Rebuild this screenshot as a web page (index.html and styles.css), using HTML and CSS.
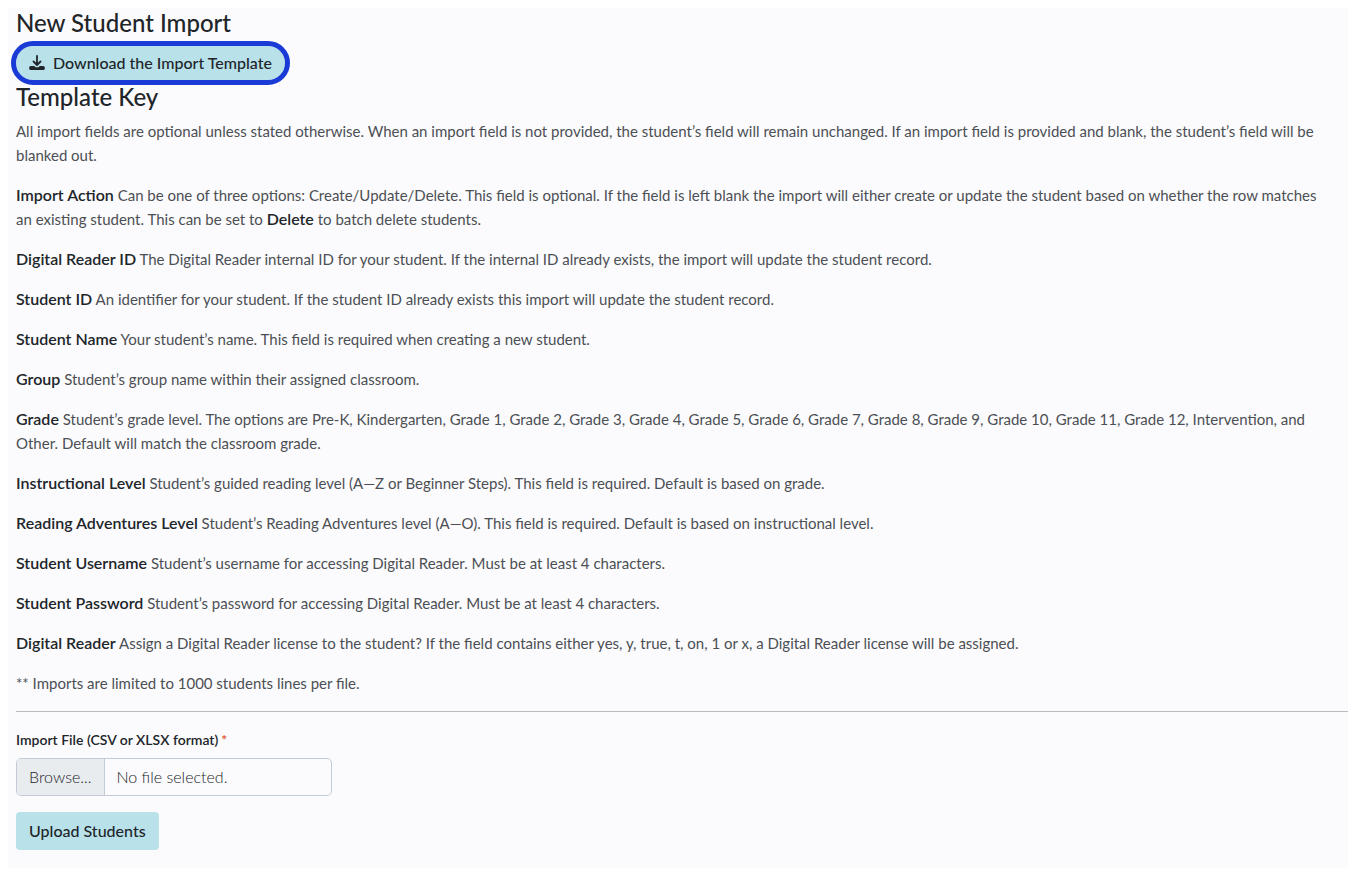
FILE: index.html
```html
<!DOCTYPE html>
<html lang="en">
<head>
<meta charset="utf-8">
<title>New Student Import</title>
<link rel="stylesheet" href="styles.css">
</head>
<body>
<main class="page">
  <h1 class="heading">New Student Import</h1>
  <button type="button" class="btn btn-download">
    <svg class="icon" viewBox="0 0 16 16" aria-hidden="true">
      <path d="M8 1v8M4.500 6.500L8 10l3.500-3.500" fill="none" stroke="currentColor" stroke-width="1.800" stroke-linecap="round" stroke-linejoin="round"/>
      <path d="M1.800 11h3.400l1.400 1.200h2.800L10.800 11h3.400A1.600 1.600 0 0 1 15.800 12.600v.9a1.600 1.600 0 0 1-1.600 1.600H1.800a1.600 1.600 0 0 1-1.600-1.600v-.9A1.600 1.600 0 0 1 1.800 11z" fill="currentColor"/>
    </svg>
    Download the Import Template
  </button>
  <h2 class="heading">Template Key</h2>
  <div class="key">
    <p>All import fields are optional unless stated otherwise. When an import field is not provided, the student’s field will remain unchanged. If an import field is provided and blank, the student’s field will be blanked out.</p>
    <p><strong>Import Action</strong> Can be one of three options: Create/Update/Delete. This field is optional. If the field is left blank the import will either create or update the student based on whether the row matches an existing student. This can be set to <strong>Delete</strong> to batch delete students.</p>
    <p><strong>Digital Reader ID</strong> The Digital Reader internal ID for your student. If the internal ID already exists, the import will update the student record.</p>
    <p><strong>Student ID</strong> An identifier for your student. If the student ID already exists this import will update the student record.</p>
    <p><strong>Student Name</strong> Your student’s name. This field is required when creating a new student.</p>
    <p><strong>Group</strong> Student’s group name within their assigned classroom.</p>
    <p><strong>Grade</strong> Student’s grade level. The options are Pre-K, Kindergarten, Grade 1, Grade 2, Grade 3, Grade 4, Grade 5, Grade 6, Grade 7, Grade 8, Grade 9, Grade 10, Grade 11, Grade 12, Intervention, and Other. Default will match the classroom grade.</p>
    <p><strong>Instructional Level</strong> Student’s guided reading level (A—Z or Beginner Steps). This field is required. Default is based on grade.</p>
    <p><strong>Reading Adventures Level</strong> Student’s Reading Adventures level (A—O). This field is required. Default is based on instructional level.</p>
    <p><strong>Student Username</strong> Student’s username for accessing Digital Reader. Must be at least 4 characters.</p>
    <p><strong>Student Password</strong> Student’s password for accessing Digital Reader. Must be at least 4 characters.</p>
    <p><strong>Digital Reader</strong> Assign a Digital Reader license to the student? If the field contains either yes, y, true, t, on, 1 or x, a Digital Reader license will be assigned.</p>
    <p>** Imports are limited to 1000 students lines per file.</p>
  </div>
  <hr class="rule">
  <form class="form">
    <label class="label" for="file">Import File (CSV or XLSX format)<span class="required">*</span></label>
    <label class="file">
      <input class="file-input" type="file" id="file" accept=".csv,.xlsx">
      <span class="file-browse">Browse...</span>
      <span class="file-name">No file selected.</span>
    </label>
    <button type="submit" class="btn btn-upload">Upload Students</button>
  </form>
</main>
</body>
</html>
```

FILE: styles.css
```css
* {
  box-sizing: border-box;
}

body {
  margin: 8px 16px 8px 8px;
  background: #fff;
  color: #212529;
  font-family: Lato, "Open Sans", sans-serif;
  font-size: 16px;
  line-height: 24px;
}

.page {
  padding: 0 0 18px 8px;
  background: #fbfbfd;
}

.heading {
  margin: 0;
  font-size: 24px;
  font-weight: 500;
  line-height: 30px;
}

.btn {
  display: inline-flex;
  align-items: center;
  border: 0;
  color: #212529;
  background: #b8e1ea;
  font: inherit;
  font-weight: 500;
}

.btn-download {
  gap: 8px;
  height: 34px;
  margin: 8px 0 2px;
  padding: 0 13px;
  border-radius: 17px;
  outline: 5px solid #1a3bd6;
}

.icon {
  width: 16px;
  height: 16px;
}

.key {
  padding: 7px 12px 0 0;
  color: #4c4f54;
  font-size: 15px;
}

.key p {
  margin: 0 0 16px;
}

.key strong {
  color: #212529;
  font-size: 16px;
  font-weight: 600;
  line-height: 20px;
}

.rule {
  margin: 0 0 18px;
  border: 0;
  border-top: 1px solid #b9bbbf;
}

.form {
  display: flex;
  flex-direction: column;
  align-items: flex-start;
}

.label {
  margin-bottom: 8px;
  font-size: 14px;
  font-weight: 600;
  line-height: 20px;
}

.required {
  margin-left: 3px;
  color: #d9512c;
}

.file {
  position: relative;
  display: flex;
  width: 316px;
  height: 38px;
  margin-bottom: 16px;
  overflow: hidden;
  border: 1px solid #c3ccd6;
  border-radius: 5px;
  font-weight: 300;
  line-height: 36px;
}

.file-input {
  position: absolute;
  inset: 0;
  opacity: 0;
}

.file-browse {
  padding: 0 12px;
  border-right: 1px solid #c3ccd6;
  background: #e9ecef;
}

.file-name {
  padding: 0 12px;
}

.btn-upload {
  height: 38px;
  padding: 0 13px;
  border-radius: 4px;
}
```
